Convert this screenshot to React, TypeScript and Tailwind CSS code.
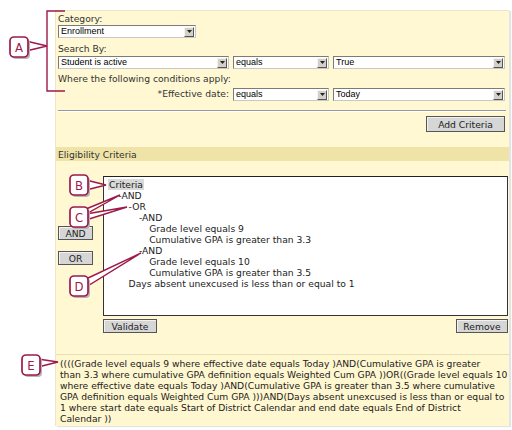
import React from "react";

const LABEL = "font-['DejaVu_Sans',sans-serif] text-[9.2px] leading-[11px] text-[#333]";

function FakeSelect({ value, className }: { value: string; className: string }) {
  return (
    <div className={`flex h-[13px] items-center border border-[#7b7b7b] border-r-[#c8c8c8] border-b-[#c8c8c8] bg-white ${className}`}>
      <span className="flex-1 truncate pl-[2px] font-['Liberation_Sans',Arial,sans-serif] text-[9px] leading-[11px] text-black">
        {value}
      </span>
      <span className="mr-[1px] flex h-[10px] w-[10px] items-center justify-center border border-[#f4f4f4] border-r-[#555] border-b-[#555] bg-[#d4d0c8]">
        <svg width="5" height="3" viewBox="0 0 5 3">
          <path d="M0 0h5L2.5 3z" fill="#222" />
        </svg>
      </span>
    </div>
  );
}

function Btn({ children, className }: { children: React.ReactNode; className: string }) {
  return (
    <div
      className={`flex items-center justify-center border border-[#555] bg-[#d6d6d6] shadow-[inset_1px_1px_0_#f2f2f2] font-['DejaVu_Sans',sans-serif] text-[9.2px] leading-[11px] text-[#222] ${className}`}
    >
      {children}
    </div>
  );
}

type Row = { level: number; text: string; branch?: boolean; root?: boolean };

const TREE: Row[] = [
  { level: 0, text: "Criteria", root: true },
  { level: 1, text: "AND", branch: true },
  { level: 2, text: "OR", branch: true },
  { level: 3, text: "AND", branch: true },
  { level: 4, text: "Grade level equals 9" },
  { level: 4, text: "Cumulative GPA is greater than 3.3" },
  { level: 3, text: "AND", branch: true },
  { level: 4, text: "Grade level equals 10" },
  { level: 4, text: "Cumulative GPA is greater than 3.5" },
  { level: 2, text: "Days absent unexcused is less than or equal to 1" },
];

const EXPR = [
  "((((Grade level equals 9 where effective date equals Today )AND(Cumulative GPA is greater",
  "than 3.3 where cumulative GPA definition equals Weighted Cum GPA ))OR((Grade level equals 10",
  "where effective date equals Today )AND(Cumulative GPA is greater than 3.5 where cumulative",
  "GPA definition equals Weighted Cum GPA )))AND(Days absent unexcused is less than or equal to",
  "1 where start date equals Start of District Calendar and end date equals End of District",
  "Calendar ))",
];

const RED = "#9c1a4c";

function Badge({ x, y, letter }: { x: number; y: number; letter: string }) {
  return (
    <g>
      <rect x={x + 2} y={y + 2} width={18} height={20} rx={4} fill="#b5b5b5" />
      <rect x={x} y={y} width={18} height={20} rx={4} fill="#fff" stroke={RED} strokeWidth={1.7} />
      <text
        x={x + 9}
        y={y + 14.5}
        textAnchor="middle"
        fontFamily="'DejaVu Sans Condensed', 'Liberation Sans', sans-serif"
        fontSize={13}
        fill={RED}
      >
        {letter}
      </text>
    </g>
  );
}

function Callouts() {
  return (
    <svg className="pointer-events-none absolute left-0 top-0" width={512} height={430}>
      <path d="M65 11H47V91H65" fill="none" stroke={RED} strokeWidth={1.4} />
      <polygon points="26,41 47,46 26,51" fill="#fff" stroke={RED} strokeWidth={1.4} />
      <polygon points="86,180 106,185 86,190" fill="#fff" stroke={RED} strokeWidth={1.4} />
      <polygon points="86,209 120,195 86,214" fill="#fff" stroke={RED} strokeWidth={1.4} />
      <polygon points="86,214 127,207 86,220" fill="#fff" stroke={RED} strokeWidth={1.4} />
      <polygon points="86,279 141,253 86,287" fill="#fff" stroke={RED} strokeWidth={1.4} />
      <polygon points="38,359 58,362 38,367" fill="#fff" stroke={RED} strokeWidth={1.4} />
      <Badge x={10} y={37} letter="A" />
      <Badge x={70} y={175} letter="B" />
      <Badge x={70} y={207} letter="C" />
      <Badge x={70} y={276} letter="D" />
      <Badge x={22} y={355} letter="E" />
    </svg>
  );
}

export default function App() {
  return (
    <div className="relative h-[430px] w-[512px] overflow-hidden bg-white">
      <div className="ml-[55px] mt-[10px] flex h-[416px] w-[454px] flex-col border-l border-t border-[#ece6c8] bg-[#fff8d3] shadow-[2px_1px_1px_#e4e4e4]">
        <div className="pl-[2px] pt-[2px]">
          <div className={LABEL}>Category:</div>
          <FakeSelect value="Enrollment" className="mt-[1px] w-[138px]" />
          <div className={`${LABEL} mt-[5px]`}>Search By:</div>
          <div className="mt-[2px] flex gap-[4px]">
            <FakeSelect value="Student is active" className="w-[171px]" />
            <FakeSelect value="equals" className="w-[96px]" />
            <FakeSelect value="True" className="w-[172px]" />
          </div>
          <div className={`${LABEL} mt-[4px]`}>Where the following conditions apply:</div>
          <div className="mt-[4px] flex gap-[4px]">
            <div className={`${LABEL} w-[171px] text-right`}>*Effective date:</div>
            <FakeSelect value="equals" className="w-[96px]" />
            <FakeSelect value="Today" className="w-[172px]" />
          </div>
        </div>

        <div className="ml-[2px] mt-[9px] w-[448px] border-t border-[#9a9a9a] shadow-[0_1px_0_#fff]" />
        <div className="mr-[4px] mt-[5px] flex justify-end">
          <Btn className="h-[16px] w-[79px]">Add Criteria</Btn>
        </div>

        <div className={`${LABEL} mt-[15px] flex h-[14px] items-center bg-[#efe3a8] pl-[2px]`}>
          Eligibility Criteria
        </div>

        <div className="mt-[15px] flex">
          <div className="ml-[2px] flex w-[45px] flex-col pt-[50px]">
            <Btn className="h-[14px] w-[35px]">AND</Btn>
            <Btn className="mt-[11px] h-[14px] w-[35px]">OR</Btn>
          </div>
          <div className="h-[140px] w-[405px] border border-[#333] border-t-[#222] bg-white pl-[2px] pt-[2px]">
            {TREE.map((r, i) => (
              <div
                key={i}
                className="h-[11px] whitespace-nowrap font-['DejaVu_Sans',sans-serif] text-[9.2px] leading-[11px] text-[#222]"
                style={{ paddingLeft: 2 + r.level * 10.3 }}
              >
                {r.root ? (
                  <span className="bg-[#d9d9d9] px-[1px]">{r.text}</span>
                ) : r.branch ? (
                  <span>-{r.text}</span>
                ) : (
                  <span>{r.text}</span>
                )}
              </div>
            ))}
          </div>
        </div>

        <div className="mt-[3px] flex w-[452px] justify-between pl-[47px]">
          <Btn className="h-[14px] w-[54px]">Validate</Btn>
          <Btn className="h-[14px] w-[52px]">Remove</Btn>
        </div>

        <div className="mt-[21px] flex-1 border-t border-[#e7dfb4] bg-[#fff7d0] pl-[4px] pt-[3px]">
          {EXPR.map((l, i) => (
            <div
              key={i}
              className="h-[11px] whitespace-nowrap font-['DejaVu_Sans',sans-serif] text-[9.2px] leading-[11px] text-[#222]"
            >
              {l}
            </div>
          ))}
        </div>
      </div>
      <Callouts />
    </div>
  );
}
